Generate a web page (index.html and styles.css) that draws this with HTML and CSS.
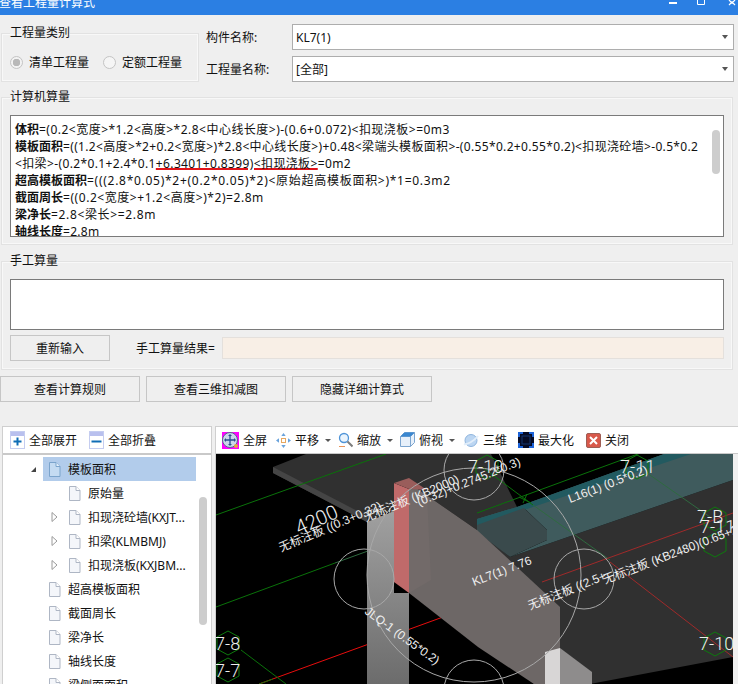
FILE: index.html
```html
<!DOCTYPE html>
<html lang="zh">
<head>
<meta charset="utf-8">
<title>查看工程量计算式</title>
<link rel="stylesheet" href="styles.css">
</head>
<body>
<svg class="defs" width="0" height="0">
  <defs>
    <linearGradient id="colgrad" x1="0" y1="0" x2="0" y2="1">
      <stop offset="0" stop-color="#a0a0a0"/>
      <stop offset="1" stop-color="#6c6c6c"/>
    </linearGradient>
  </defs>
  <symbol id="doc" viewBox="0 0 13 15">
    <path d="M1.5.5h6.5l4 4v10h-10.500z" fill="#f4f6fa" stroke="#aeb6c4"/>
    <path d="M8 .5v4h4" fill="#fff" stroke="#aeb6c4"/>
  </symbol>
  <symbol id="docsel" viewBox="0 0 13 15">
    <path d="M1.500.5h6.500l4 4v10h-10.500z" fill="#c4dbf2" stroke="#7ba4cc"/>
    <path d="M8 .5v4h4" fill="#e4f0fb" stroke="#7ba4cc"/>
  </symbol>
  <symbol id="closed" viewBox="0 0 7 10">
    <path d="M1 .5l5 4.500-5 4.500z" fill="#fff" stroke="#9a9a9a"/>
  </symbol>
</svg>

<div class="titlebar">
  <span class="title">查看工程量计算式</span>
  <svg class="winbtns" width="70" height="15" viewBox="0 0 70 15">
    <rect x="1" y="2" width="8" height="2" fill="#fff"/>
    <path d="M29.500 0v4.500h7v-4.500" fill="none" stroke="#fff"/>
    <path d="M61 0l3 3 3-3M61 5l3-3 3 3" fill="none" stroke="#fff" stroke-width="1.200"/>
  </svg>
</div>

<div class="toprow">
  <fieldset class="group typegroup">
    <legend>工程量类别</legend>
    <div class="radios">
      <span class="radio on"></span><span class="radiolabel first">清单工程量</span>
      <span class="radio"></span><span class="radiolabel">定额工程量</span>
    </div>
  </fieldset>
  <div class="form">
    <div class="formrow">
      <span class="formlabel">构件名称:</span>
      <div class="combo"><span>KL7(1)</span><i class="caret"></i></div>
    </div>
    <div class="formrow">
      <span class="formlabel">工程量名称:</span>
      <div class="combo"><span>[全部]</span><i class="caret"></i></div>
    </div>
  </div>
</div>

<fieldset class="group calc">
  <legend>计算机算量</legend>
  <div class="formula">
    <div class="line sp48"><b>体积</b>=(0.2&lt;宽度&gt;*1.2&lt;高度&gt;*2.8&lt;中心线长度&gt;)-(0.6+0.072)&lt;扣现浇板&gt;=0m3</div>
    <div class="line sp34"><b>模板面积</b>=((1.2&lt;高度&gt;*2+0.2&lt;宽度&gt;)*2.8&lt;中心线长度&gt;)+0.48&lt;梁端头模板面积&gt;-(0.55*0.2+0.55*0.2)&lt;扣现浇砼墙&gt;-0.5*0.2</div>
    <div class="line sp37">&lt;扣梁&gt;-(0.2*0.1+2.4*0.1<u>+6.3401+0.8399)&lt;扣现浇板&gt;</u>=0m2</div>
    <div class="line sp72"><b>超高模板面积</b>=(((2.8*0.05)*2+(0.2*0.05)*2)&lt;原始超高模板面积&gt;)*1=0.3m2</div>
    <div class="line sp55"><b>截面周长</b>=((0.2&lt;宽度&gt;+1.2&lt;高度&gt;)*2)=2.8m</div>
    <div class="line sp65"><b>梁净长</b>=2.8&lt;梁长&gt;=2.8m</div>
    <div class="line sp30"><b>轴线长度</b>=2.8m</div>
    <div class="vscroll"></div>
  </div>
</fieldset>

<fieldset class="group manual">
  <legend>手工算量</legend>
  <div class="manualbox"></div>
  <div class="manualrow">
    <button class="btn redo">重新输入</button>
    <span class="resultlabel">手工算量结果=</span>
    <div class="result"></div>
  </div>
</fieldset>

<div class="actions">
  <button class="btn action">查看计算规则</button>
  <button class="btn action">查看三维扣减图</button>
  <button class="btn action">隐藏详细计算式</button>
</div>

<div class="bottom">
  <section class="treepanel">
    <div class="toolbar lefttools">
      <span class="tool">
        <svg width="15" height="18" viewBox="0 0 15 18"><rect x=".5" y=".5" width="14" height="17" fill="#fff" stroke="#c5cdf0"/><rect x="1" y="1" width="13" height="4" fill="#b9c0ee"/><path d="M7.500 6.500v8M3.500 10.500h8" stroke="#0f6db5" stroke-width="2"/></svg>全部展开
      </span>
      <span class="tool">
        <svg width="15" height="18" viewBox="0 0 15 18"><rect x=".5" y=".5" width="14" height="17" fill="#fff" stroke="#c5cdf0"/><rect x="1" y="1" width="13" height="4" fill="#b9c0ee"/><path d="M2.500 10.500h10" stroke="#0f6db5" stroke-width="2"/></svg>全部折叠
      </span>
    </div>
    <div class="tree">
      <div class="treelist">
        <div class="node selected">
          <svg class="arrow" width="7" height="7" viewBox="0 0 7 7"><path d="M6 1v5h-5z" fill="#444"/></svg>
          <span class="nodebody"><svg class="docicon" width="13" height="15"><use href="#docsel"/></svg>模板面积</span>
        </div>
        <div class="node l1"><span class="nodebody"><svg class="docicon" width="13" height="15"><use href="#doc"/></svg>原始量</span></div>
        <div class="node has"><svg class="arrow" width="7" height="10"><use href="#closed"/></svg><span class="nodebody"><svg class="docicon" width="13" height="15"><use href="#doc"/></svg>扣现浇砼墙(KXJT...</span></div>
        <div class="node has"><svg class="arrow" width="7" height="10"><use href="#closed"/></svg><span class="nodebody"><svg class="docicon" width="13" height="15"><use href="#doc"/></svg>扣梁(KLMBMJ)</span></div>
        <div class="node has"><svg class="arrow" width="7" height="10"><use href="#closed"/></svg><span class="nodebody"><svg class="docicon" width="13" height="15"><use href="#doc"/></svg>扣现浇板(KXJBM...</span></div>
        <div class="node l0"><span class="nodebody"><svg class="docicon" width="13" height="15"><use href="#doc"/></svg>超高模板面积</span></div>
        <div class="node l0"><span class="nodebody"><svg class="docicon" width="13" height="15"><use href="#doc"/></svg>截面周长</span></div>
        <div class="node l0"><span class="nodebody"><svg class="docicon" width="13" height="15"><use href="#doc"/></svg>梁净长</span></div>
        <div class="node l0"><span class="nodebody"><svg class="docicon" width="13" height="15"><use href="#doc"/></svg>轴线长度</span></div>
        <div class="node l0"><span class="nodebody"><svg class="docicon" width="13" height="15"><use href="#doc"/></svg>梁侧面面积</span></div>
      </div>
      <div class="treescroll"><div class="thumb"></div></div>
    </div>
  </section>

  <section class="viewpanel">
    <div class="toolbar viewtools">
      <span class="vt w-full">
        <svg width="17" height="17" viewBox="0 0 17 17"><rect width="17" height="17" fill="#f0f"/><circle cx="8" cy="8" r="7.500" fill="#c9d6ea" stroke="#56688a"/><path d="M8 3v10M3 8h10" stroke="#2a4f8e" stroke-width="1.300"/><path d="M8 2l2 2h-4zM8 14l2-2h-4zM2 8l2-2v4zM14 8l-2-2v4z" fill="#2a4f8e"/><circle cx="14" cy="14" r="2" fill="#e5a93a"/></svg>全屏
      </span>
      <span class="vt w-pan">
        <svg width="15" height="15" viewBox="0 0 15 15"><path d="M7.500 0l2.200 3h-4.400zM7.500 15l2.200-3h-4.400zM0 7.500l3-2.200v4.400zM15 7.500l-3-2.200v4.400z" fill="#6aa3dc"/><rect x="5.500" y="5.500" width="4" height="4" fill="#fff" stroke="#e8a860"/></svg>平移<i class="tcaret"></i>
      </span>
      <span class="vt w-zoom">
        <svg width="15" height="17" viewBox="0 0 15 17"><circle cx="6" cy="6" r="4.500" fill="#eaf4fd" stroke="#4f94d8" stroke-width="1.300"/><path d="M9.500 9.500l5 5" stroke="#7d7d7d" stroke-width="2"/><path d="M1 14.500h6" stroke="#e8945a"/></svg>缩放<i class="tcaret"></i>
      </span>
      <span class="vt w-top">
        <svg width="15" height="16" viewBox="0 0 15 16"><path d="M.5 4.500l4-4h10v10l-4 4h-10z" fill="#e7f0fa" stroke="#7ca5cf"/><path d="M.5 4.500h10v10M10.500 4.500l4-4" fill="none" stroke="#7ca5cf"/><path d="M.5 4.500l4-4h10l-4 4z" fill="#3a87d0"/></svg>俯视<i class="tcaret"></i>
      </span>
      <span class="vt w-3d">
        <svg width="16" height="15" viewBox="0 0 16 15"><ellipse cx="8" cy="7.500" rx="6" ry="6" fill="#bcd6f2" stroke="#8fb5de"/><path d="M1 11c3 1 10-3 14-8" fill="none" stroke="#e2eefa" stroke-width="2"/></svg>三维
      </span>
      <span class="vt w-max">
        <svg width="16" height="16" viewBox="0 0 16 16"><rect width="16" height="16" fill="#050a24"/><path d="M1 5v-4h4M11 1h4v4M15 11v4h-4M5 15h-4v-4" fill="none" stroke="#1d63d8" stroke-width="2"/><rect x="4" y="4" width="8" height="8" fill="none" stroke="#15356e"/></svg>最大化
      </span>
      <span class="vt w-close">
        <svg width="15" height="15" viewBox="0 0 15 15"><rect x=".5" y=".5" width="14" height="14" rx="1.500" fill="#d8584a" stroke="#9e5e55"/><path d="M4 4l7 7M11 4l-7 7" stroke="#fff" stroke-width="2"/></svg>关闭
      </span>
    </div>
    <div class="canvaswrap">
      <svg class="scene" width="517" height="230" viewBox="215 454 517 230">
        <rect class="black" x="215" y="454" width="517" height="230"/>
        <polygon class="slabtop" points="272,467 305,454 490,454 516,507 476,522 476,530 408,483 393,483 393,510 366,522 272,473"/>
        <polygon class="slabedge" points="272,467 366,516 366,522 272,473"/>
        <polygon class="slabtop" points="509,557 732,480 732,657 589,684 533,684 476,640 476,530"/>
        <polygon class="teal" points="476,519 516,507 663,454 732,454 732,480 509,557 546,540 546,530 523,508 476,525"/>
        <polygon class="tealdark" points="476,519 516,507 663,454 690,454 523,510 476,526"/>
        <polygon class="tealdim" points="476,525 523,508 546,530 546,540 509,557 476,532"/>
        <path class="green" d="M215 515L385 454"/>
        <path class="green" d="M215 607L334 563"/>
        <path class="greenfaint" d="M334 563L408 536"/>
        <path class="green" d="M476 513L645 451M481 467L532 505"/>
        <path class="greenfaint" d="M532 505L609 560M646 473L709 517"/>
        <path class="green" d="M522 503l4-9M518 497l12 6"/>
        <path class="red" d="M258 684L442 617"/>
        <path class="darkred" d="M541 582L732 513M609 562L732 657"/>
        <path class="green" d="M240 650L285 684M258 684L272 679"/>

        <polygon class="columngray" points="366,522 393,511 393,593 408,593 408,684 366,684"/>
        <polygon class="beam" points="408,483 476,530 559,607 559,650 544,684 533,684 477,647 408,593"/>
        <polygon class="pink" points="393,483 408,489 408,593 393,582"/>
        <polygon class="pinktop" points="393,483 408,478 426,490 408,489"/>
        <polygon class="beamshade" points="408,489 426,494 430,580 408,593"/>
        <polygon class="greycol" points="559,648 591,672 591,684 559,684"/>
        <polygon class="whitecol" points="544,652 559,648 559,684 544,684"/>

        <circle class="ring" cx="473" cy="575" r="107"/>
        <circle class="ring" cx="363" cy="579" r="30"/>
        <circle class="ring" cx="583" cy="579" r="30"/>
        <circle class="ring" cx="473" cy="470" r="30"/>
        <circle class="ring" cx="473" cy="690" r="30"/>

        <path class="hex" d="M227 631l11 6v12l-11 6-11-6v-12zM227 658l11 6v12l-11 6-11-6v-12zM486 455l11 6v12l-11 6-11-6v-12zM636 455l11 6v12l-11 6-11-6v-12zM714 507l11 6v12l-11 6-11-6v-12zM714 533l11 6v12l-11 6-11-6v-12zM714 632l11 6v12l-11 6-11-6v-12z"/>

        <text class="axis" x="214" y="650">7-8</text>
        <text class="axis" x="214" y="677">7-7</text>
        <text class="axis" x="467" y="473">7-10</text>
        <text class="axis" x="619" y="473">7-11</text>
        <text class="axis" x="696" y="523">7-B</text>
        <text class="axis" x="699" y="533">7-11</text>
        <text class="axis" x="698" y="650">7-10</text>

        <text class="dim" transform="translate(298 535) rotate(-24)">4200</text>
        <text class="note" transform="translate(280 552) rotate(-23)">无标注板 ((0.3+0.32)</text>
        <text class="note" transform="translate(365 522) rotate(-23)">无标注板 (KB2000)</text>
        <text class="note" transform="translate(418 506) rotate(-22)">(0.32)+0.2745.2*0.3)</text>
        <text class="note" transform="translate(569 503) rotate(-21)">L16(1) (0.5*0.2)</text>
        <text class="note" transform="translate(473 586) rotate(-21)">KL7(1) 7.76</text>
        <text class="note" transform="translate(529 610) rotate(-22)">无标注板 ((2.5+</text>
        <text class="note" transform="translate(604 584) rotate(-21)">无标注板 (KB2480)(0.65+1.2)</text>
        <text class="note" transform="translate(363 613) rotate(36)">JLQ-1 (0.55*0.2)</text>
      </svg>
      <div class="edge"></div>
    </div>
  </section>
</div>
</body>
</html>
```

FILE: styles.css
```css
* { box-sizing: border-box; }

html, body {
  margin: 0;
  width: 738px;
  height: 684px;
  overflow: hidden;
}

body {
  background: #efefef;
  color: #111;
  font-family: "Noto Sans", "Noto Sans CJK SC", sans-serif;
  font-size: 12px;
}

.defs { display: block; height: 0; }

.titlebar {
  height: 15px;
  background: #2b7fe3;
  display: flex;
  justify-content: space-between;
  overflow: hidden;
  color: #fff;
}
.title { font-size: 12px; line-height: 14px; margin-top: -4px; margin-left: -1px; }
.winbtns { flex: none; }

.toprow { display: flex; padding: 9px 4px 0 1px; }

.group {
  margin: 0;
  padding: 0;
  border: 1px solid #e2e2e2;
  box-shadow: inset 0 0 0 1px #f8f8f8;
  min-width: 0;
}
.group legend {
  padding: 0;
  line-height: 16px;
  font-size: 12px;
}

.typegroup { width: 198px; height: 57px; padding: 0 8px; margin-top: 1px; }
.radios { display: flex; align-items: center; height: 30px; padding-top: 12px; }
.radio {
  width: 13px;
  height: 13px;
  border: 1px solid #c4c4c4;
  border-radius: 50%;
  background: #f5f5f5;
  flex: none;
}
.radio.on { background: radial-gradient(circle, #b8b8b8 0 3.500px, #f2f2f2 4px); }
.radiolabel { margin-left: 6px; }
.radiolabel.first { margin-right: 14px; }

.form { flex: 1; padding-left: 7px; display: flex; flex-direction: column; gap: 6px; }
.formrow { display: flex; align-items: center; }
.formlabel { width: 86px; flex: none; }
.combo {
  flex: 1;
  height: 26px;
  background: #fff;
  border: 1px solid #adadad;
  display: flex;
  align-items: center;
  justify-content: space-between;
  padding: 0 5px 0 3px;
}
.caret {
  width: 0;
  height: 0;
  border-left: 3px solid transparent;
  border-right: 3px solid transparent;
  border-top: 4px solid #555;
}

.calc { margin: 7px 5px 0 1px; height: 156px; padding: 10px 8px 0; }
.formula {
  position: relative;
  height: 122px;
  background: #fff;
  border: 1px solid #7a7a7a;
  padding: 5px 0 0 4px;
  overflow: hidden;
}
.line { line-height: 17px; white-space: nowrap; }
.sp30 { letter-spacing: .3px; }
.sp34 { letter-spacing: .34px; }
.sp37 { letter-spacing: .37px; }
.sp48 { letter-spacing: .48px; }
.sp55 { letter-spacing: .55px; }
.sp65 { letter-spacing: .65px; }
.sp72 { letter-spacing: .72px; }
.line b { font-weight: 700; letter-spacing: 0; }
.line u {
  text-decoration: underline #e0141a 2px;
  text-underline-offset: 0;
}
.vscroll {
  position: absolute;
  right: 3px;
  top: 14px;
  width: 8px;
  height: 44px;
  background: #cdcdcd;
  border-radius: 4px;
}

.manual { margin: 8px 5px 0 1px; height: 117px; padding: 10px 8px 0; }
.manualbox { height: 51px; background: #fff; border: 1px solid #7a7a7a; }
.manualrow { display: flex; align-items: center; margin-top: 5px; }

.btn {
  background: #efefef;
  border: 1px solid #c6c6c6;
  font: inherit;
  color: inherit;
  padding: 0;
}
.redo { width: 100px; height: 26px; }
.resultlabel { margin-left: 26px; width: 86px; flex: none; }
.result { flex: 1; height: 22px; background: #f8efe6; border: 1px solid #e4e0dc; }

.actions { display: flex; gap: 6px; margin-top: 6px; }
.action { width: 140px; height: 26px; }

.bottom { display: flex; margin-top: 24px; padding-left: 2px; height: 258px; gap: 3px; }

.toolbar {
  flex: none;
  height: 28px;
  background: #fff;
  border-bottom: 2px solid #c9c9c9;
  display: flex;
  align-items: center;
}

.treepanel {
  width: 210px;
  flex: none;
  background: #fff;
  border: 1px solid #cfcfcf;
  border-bottom: 0;
  display: flex;
  flex-direction: column;
}
.lefttools { padding-left: 7px; gap: 12px; }
.tool { display: flex; align-items: center; gap: 4px; }

.tree { flex: 1; display: flex; overflow: hidden; background: #fff; }
.treelist { flex: 1; padding-top: 2px; min-width: 0; }
.node { height: 24px; display: flex; align-items: center; white-space: nowrap; }
.node.l0 { padding-left: 45px; }
.node.l1 { padding-left: 65px; }
.node.selected { padding-left: 27px; }
.node.has { padding-left: 48px; }
.arrow { flex: none; margin-right: 10px; }
.selected .arrow { margin-right: 6px; }
.nodebody { display: flex; align-items: center; height: 24px; flex: none; }
.selected .nodebody { background: #b2cceb; width: 153px; padding-left: 5px; }
.docicon { margin-right: 7px; flex: none; }

.treescroll { width: 12px; flex: none; padding-top: 42px; }
.thumb { width: 8px; height: 128px; background: #cdcdcd; border-radius: 4px; }

.viewpanel {
  flex: 1;
  min-width: 0;
  background: #fff;
  border-top: 1px solid #cfcfcf;
  border-left: 1px solid #cfcfcf;
  display: flex;
  flex-direction: column;
}
.viewpanel .toolbar { height: 27px; border-bottom-width: 1px; }
.vt { display: flex; align-items: center; gap: 4px; flex: none; }
.viewtools { padding-left: 6px; }
.w-full { width: 54px; }
.w-pan { width: 62px; }
.w-zoom { width: 62px; }
.w-top { width: 63px; }
.w-3d { width: 55px; }
.w-max { width: 68px; }
.w-close { width: 60px; }
.tcaret {
  width: 0;
  height: 0;
  margin-left: 2px;
  border-left: 3px solid transparent;
  border-right: 3px solid transparent;
  border-top: 3px solid #555;
}

.canvaswrap { flex: 1; display: flex; overflow: hidden; }
.scene { display: block; flex: none; }
.edge { flex: 1; background: #f0f0f0; }

.scene path, .scene circle { fill: none; }
.black { fill: #000; }
.slabtop { fill: #303030; }
.slabedge { fill: #454545; }
.teal { fill: #3f5b5d; }
.tealdark { fill: #225a60; }
.tealdim { fill: #3a4a4c; }
.beam { fill: #6d6766; }
.beamshade { fill: #726a69; }
.pink { fill: #c06a6a; }
.pinktop { fill: #9a5d5b; }
.columngray { fill: url(#colgrad); }
.whitecol { fill: #d8d6d6; }
.greycol { fill: #8e8c8c; }
.scene .green { stroke: #0a720a; }
.scene .greenfaint { stroke: #2f6a40; }
.scene .red { stroke: #e80d0d; }
.scene .darkred { stroke: #a02a2a; }
.scene .ring { stroke: #a8a8a8; }
.scene .hex { stroke: #0d7a0d; }
.scene text {
  fill: #efefef;
  font-family: "Liberation Sans", "Noto Sans CJK SC", sans-serif;
}
.scene .axis { font-family: Roboto, sans-serif; font-weight: 300; font-size: 18px; }
.scene .dim { font-family: Roboto, sans-serif; font-weight: 300; font-size: 20px; }
.scene .note { font-size: 12px; }
```
